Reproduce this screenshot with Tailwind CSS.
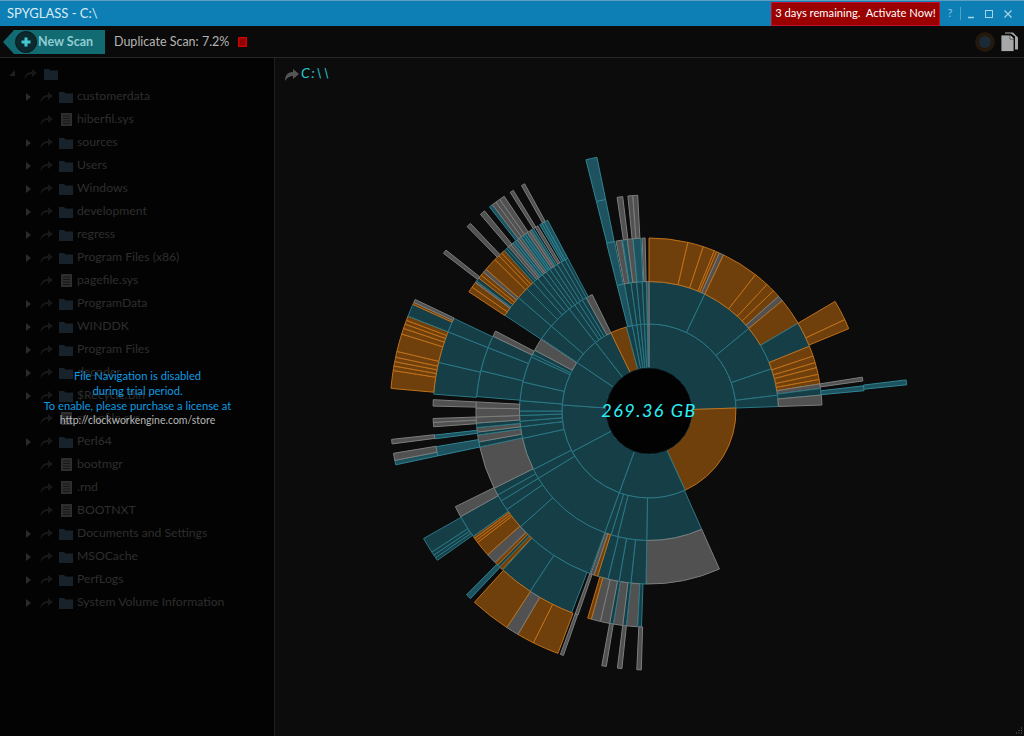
<!DOCTYPE html>
<html lang="en">
<head>
  <meta charset="UTF-8">
  <title>SPYGLASS - C:\</title>
  <script src="https://cdn.jsdelivr.net/npm/@tailwindcss/browser@4"></script>
</head>
<body class="h-[736px] w-[1024px] overflow-hidden bg-[#0c0c0c] font-['Lato',sans-serif] flex flex-col">
  <!-- Title bar -->
  <header class="h-[27px] shrink-0 bg-[#0e7fb4] border-t border-[#5f9fc0] border-b border-b-[#0a0a0a] flex items-center pl-[7px] text-[#d9ecf5] text-[13px]">
    <span>SPYGLASS - C:\</span>
    <div class="ml-auto flex items-center h-full">
      <div class="w-[169px] h-[24px] bg-[#9b0000] border border-[#c4102c] flex items-center justify-center text-white text-[11.2px] whitespace-pre">3 days remaining.  Activate Now!</div>
      <div class="w-[84px] flex items-center text-[#8cc4e2]">
        <span class="w-[20px] text-center text-[11px]">?</span>
        <span class="w-px h-[13px] bg-[#4da3cc]"></span>
        <svg class="ml-[6px]" width="8" height="10" viewBox="0 0 8 10"><path d="M1 8.5h6" stroke="#a8d4ea" stroke-width="1.5"/></svg>
        <svg class="ml-[9px]" width="10" height="10" viewBox="0 0 10 10"><rect x="1.5" y="1.5" width="7" height="7" fill="none" stroke="#a8d4ea"/></svg>
        <svg class="ml-[9px]" width="10" height="10" viewBox="0 0 10 10"><path d="M1.5 1.5l7 7M8.5 1.5l-7 7" stroke="#a8d4ea" stroke-width="1.2"/></svg>
      </div>
    </div>
  </header>

  <!-- Toolbar -->
  <div class="h-[31px] shrink-0 bg-[#0a0a0a] border-b border-[#262626] flex items-center">
    <button class="relative ml-[3px] h-[24px] w-[102px] bg-[#126a72] [clip-path:polygon(0_50%,11px_0,100%_0,100%_100%,11px_100%)] flex items-center pl-[35px] text-[#8fcdd2] text-[12.5px] font-bold">
      New Scan
      <span class="absolute left-[12px] top-px w-[22px] h-[22px] rounded-full bg-[#0a2a30] border border-[#0c1518] flex items-center justify-center">
        <svg width="12" height="12" viewBox="0 0 12 12"><path d="M6 1.5v9M1.5 6h9" stroke="#45c9d0" stroke-width="3"/></svg>
      </span>
    </button>
    <span class="ml-[9px] text-[#b4b4b4] text-[12.5px]">Duplicate Scan: 7.2%</span>
    <span class="ml-[9px] w-[9px] h-[10px] bg-[#b00000] border border-[#d00000] flex items-center justify-center"><span class="w-[5px] h-[6px] bg-[#8c0000]"></span></span>
    <div class="ml-auto mr-[4px] flex items-center gap-[5px]">
      <span class="w-[20px] h-[20px] rounded-full bg-[#1b2a36] border-[4px] border-[#24180c]"></span>
      <svg width="20" height="20" viewBox="0 0 20 20">
        <path d="M5 0.5h8l5 5v12h-3v-13l-4-3h-6z" fill="#a8a8a8"/>
        <path d="M1 3h9l4 4v12.5H1z" fill="#a8a8a8" stroke="#0a0a0a" stroke-width="0.8"/>
        <path d="M10 3v4h4" fill="#d8d8d8" stroke="#0a0a0a" stroke-width="0.6"/>
      </svg>
    </div>
  </div>

  <div class="flex-1 flex min-h-0">
    <!-- File tree -->
    <aside class="relative w-[275px] shrink-0 bg-[#030303] border-r border-[#1f1f1f] pt-[4px] text-[12.2px] text-[#2e2e2e]">
      <ul id="tree"></ul>
      <div class="absolute left-0 top-[310px] w-[275px] text-center text-[11.2px] leading-[15px] text-[#0f9be0]">
        <p>File Navigation is disabled</p>
        <p>during trial period.</p>
        <p>To enable, please purchase a license at</p>
        <p class="text-[#b5b5b5] text-[10.5px] leading-[14px]">http://clockworkengine.com/store</p>
      </div>
    </aside>

    <!-- Sunburst -->
    <main class="relative flex-1 min-w-0">
      <svg id="burst" class="block" width="748" height="678" viewBox="276 58 748 678"></svg>
      <svg class="absolute right-px bottom-px" width="9" height="9" viewBox="0 0 9 9"><path d="M7 1.5h1v1H7zM4.5 4h1v1h-1zM7 4h1v1H7zM2 6.5h1v1H2zM4.5 6.5h1v1h-1zM7 6.5h1v1H7z" fill="#6a6a6a"/></svg>
    </main>
  </div>

  <script>
    // tree rows: name, has children, icon type
    const rows = [
      ['customerdata', 1, 'd'], ['hiberfil.sys', 0, 'f'], ['sources', 1, 'd'], ['Users', 1, 'd'],
      ['Windows', 1, 'd'], ['development', 1, 'd'], ['regress', 1, 'd'], ['Program Files (x86)', 1, 'd'],
      ['pagefile.sys', 0, 'f'], ['ProgramData', 1, 'd'], ['WINDDK', 1, 'd'], ['Program Files', 1, 'd'],
      ['decoder', 1, 'd'], ['$Recycle.Bin', 1, 'd'], ['swapfile.sys', 0, 'f'], ['Perl64', 1, 'd'],
      ['bootmgr', 0, 'f'], ['.rnd', 0, 'f'], ['BOOTNXT', 0, 'f'], ['Documents and Settings', 1, 'd'],
      ['MSOCache', 1, 'd'], ['PerfLogs', 1, 'd'], ['System Volume Information', 1, 'd']
    ];
    const shareIcon = '<svg width="15" height="13" viewBox="0 0 15 13"><path d="M1.5 12.5C1.5 7.5 4.5 5 9 5V2l5 4-5 4V7C6 7 3.5 8.5 1.5 12.5z" fill="#181818"/></svg>';
    const folderIcon = '<svg width="14" height="12" viewBox="0 0 14 12"><path d="M0 2.5V1h5l1.5 1.5H14V12H0z" fill="#18222b"/></svg>';
    const fileIcon = '<svg width="11" height="13" viewBox="0 0 11 13"><rect width="11" height="13" fill="#2e2e2e"/><path d="M2 3h7M2 5.5h7M2 8h7M2 10.5h7" stroke="#161616"/></svg>';
    const caret = '<svg width="5" height="8" viewBox="0 0 5 8"><path d="M0 0l5 4-5 4z" fill="#2b2b2b"/></svg>';

    let treeHtml = `<li class="h-[23px] flex items-center pl-[9px]">
      <svg width="7" height="7" viewBox="0 0 7 7"><path d="M6 0v6H0z" fill="#1f1f1f"/></svg>
      <span class="ml-[7px] flex">${shareIcon}</span><span class="ml-[6px] flex">${folderIcon}</span></li>`;
    rows.forEach(r => {
      treeHtml += `<li class="h-[23px] flex items-center">
        <span class="w-[39px] pl-[26px] flex">${r[1] ? caret : ''}</span>
        <span class="w-[20px] flex">${shareIcon}</span>
        <span class="w-[18px] flex ${r[2] === 'f' ? 'pl-[2px]' : ''}">${r[2] === 'd' ? folderIcon : fileIcon}</span>
        <span>${r[0]}</span></li>`;
    });
    document.getElementById('tree').innerHTML = treeHtml;

    // sunburst geometry: angles in degrees clockwise from north
    const cx = 650, cy = 411;
    const R = [43, 87, 129.5, 173, 216, 259];
    const kinds = {
      t: 'fill-[#163e47] stroke-[#2a7885]',
      b: 'fill-[#1d525e] stroke-[#2f8493]',
      o: 'fill-[#6f400c] stroke-[#c0701a]',
      g: 'fill-[#505150] stroke-[#7c7e7d]'
    };
    // [ring, kind, boundary angles...]
    const data = [
      [0, 't', 0, 88], [0, 'o', 88, 155.5], [0, 't', 155.5, 200, 242, 274, 304, 322, 334],
      [0, 'o', 334, 345], [0, 't', 345, 349, 352, 354.5, 357], [0, 'g', 358.8, 360], [0, 't', 357, 358.8],

      [1, 't', 0, 25.5, 50.4, 71, 83, 88],
      [1, 't', 156, 181, 194, 197, 200, 238.7, 243.2, 257.8, 263, 265.5, 268, 270, 274.6, 283, 294.7, 296, 298],
      [1, 'g', 298, 303.6],
      [1, 't', 304, 311, 322, 325, 327, 329, 331], [1, 'g', 331, 334],
      [1, 'b', 345.8, 349], [1, 't', 349, 352, 354.5, 357], [1, 'g', 358.8, 360], [1, 't', 357, 358.8],

      [2, 'o', 0, 13, 18.3, 22.2, 23, 24], [2, 'g', 24, 25.5],
      [2, 'o', 25.5, 38, 43, 46, 48.5], [2, 'g', 48.5, 50.4],
      [2, 'o', 50.4, 59.5], [2, 't', 59.5, 68],
      [2, 'o', 68, 71.5, 73.8, 75.5, 77.8, 79.5, 81], [2, 'g', 81, 82.5], [2, 't', 82.5, 84.7], [2, 'g', 84.7, 88],
      [2, 'g', 156, 181], [2, 't', 181, 186, 190, 193.7, 197.3], [2, 'o', 197.3, 198.5], [2, 'g', 198.5, 199.7],
      [2, 't', 200, 228, 235.3, 238.7, 241, 243.5], [2, 'g', 243.5, 258],
      [2, 't', 258, 259.7], [2, 'g', 259.7, 262], [2, 't', 262, 263], [2, 'g', 263, 264.5], [2, 't', 264.5, 266], [2, 'g', 266, 268, 271, 273],
      [2, 't', 274.8, 283.5, 291.5, 295.6], [2, 'g', 295.6, 297.5],
      [2, 't', 303.6, 311, 315, 318, 320, 322, 323.5, 325, 326.5, 328, 329.5, 331, 332],
      [2, 'b', 345.8, 348.5], [2, 'g', 349, 351], [2, 'b', 351.2, 352.8], [2, 'g', 352.8, 354.7], [2, 'b', 354.7, 357.3], [2, 'g', 357.7, 358.7],

      [3, 'o', 59.5, 65, 67.6], [3, 'g', 81, 82], [3, 'b', 83.3, 84.6],
      [3, 'g', 183, 186], [3, 't', 182, 183], [3, 't', 186, 187], [3, 'g', 187, 189.5], [3, 't', 189.5, 190.5], [3, 'g', 190.5, 193, 195.5], [3, 'o', 195.5, 196.5],
      [3, 'g', 199.2, 200],
      [3, 't', 201, 213.4, 222.6], [3, 'o', 222.8, 223.8], [3, 't', 223.8, 224.5], [3, 'o', 224.5, 225.3], [3, 'g', 225.5, 228.3],
      [3, 'o', 228.3, 232.5, 233.2, 233.9, 234.5], [3, 't', 234.5, 240.7], [3, 'g', 240.7, 243.7],
      [3, 'b', 258, 260.5], [3, 'b', 262.6, 263.6], [3, 'g', 265.8, 267, 268], [3, 'g', 271.3, 273],
      [3, 't', 274.5, 283, 291.5, 295.4],
      [3, 'o', 303.5, 305, 306.5], [3, 'g', 306.5, 307], [3, 't', 307, 308], [3, 'o', 308, 309, 310], [3, 'g', 310, 311],
      [3, 'o', 311, 314.5, 316, 317, 318], [3, 't', 318, 318.8, 319.5], [3, 'g', 319.5, 320.3, 321], [3, 'b', 321, 321.7, 322.4], [3, 'g', 322.4, 323, 323.7], [3, 'b', 323.7, 324.4, 325, 325.7], [3, 'g', 325.7, 326.4, 327], [3, 'b', 327, 327.7], [3, 'g', 328.2, 329], [3, 'b', 329.6, 330.3, 331, 332],
      [3, 'g', 351.5, 353], [3, 'g', 354.4, 355.7, 357], [3, 'b', 345.9, 348.4],

      [4, 'b', 83.1, 84.2], [4, 'g', 181.7, 182.7], [4, 'g', 186, 187], [4, 'g', 189.5, 190.5],
      [4, 'o', 200.6, 206.5], [4, 'o', 206.5, 210.4], [4, 'g', 210.4, 213.3], [4, 'o', 213.3, 222.4], [4, 'g', 199.3, 200],
      [4, 'b', 223.6, 224.8],
      [4, 't', 234.8, 235.5, 236.2, 237, 240.5],
      [4, 'g', 262.7, 263.7], [4, 'b', 258, 259], [4, 'g', 259, 260.6],
      [4, 'o', 275, 279, 280, 281, 282, 283.3, 287.3, 288.6, 289.6, 290.5, 291.5], [4, 't', 291.5, 294.3], [4, 'o', 294.3, 294.8], [4, 'g', 294.8, 295.5],
      [4, 'g', 307.5, 308.4], [4, 'g', 315.4, 316.4], [4, 'g', 319.4, 320.6],
      [4, 'b', 322, 322.8], [4, 'g', 322.8, 323.8, 324.8, 326], [4, 'g', 327.6, 328.4], [4, 'g', 330.5, 331.3],
      [4, 'b', 345.9, 348.4]
    ];

    const pt = (r, a) => {
      const t = a * Math.PI / 180;
      return (cx + r * Math.sin(t)).toFixed(1) + ' ' + (cy - r * Math.cos(t)).toFixed(1);
    };
    const wedge = (ring, a0, a1) => {
      const r0 = R[ring], r1 = R[ring + 1];
      return `M${pt(r0, a0)}L${pt(r1, a0)}A${r1} ${r1} 0 0 1 ${pt(r1, a1)}L${pt(r0, a1)}A${r0} ${r0} 0 0 0 ${pt(r0, a0)}Z`;
    };

    let svg = '';
    data.forEach(d => {
      for (let i = 2; i < d.length - 1; i++) {
        svg += `<path d="${wedge(d[0], d[i], d[i + 1])}" class="${kinds[d[1]]}" stroke-width="1"/>`;
      }
    });
    svg += `<circle cx="${cx}" cy="${cy}" r="43" fill="#020202" stroke="#0d1f24"/>`;
    svg += `<text x="${cx}" y="417" text-anchor="middle" class="fill-[#2df0f5] font-['Lato',sans-serif] italic text-[18px] tracking-[1.5px]">269.36 GB</text>`;
    // path label sits in the same canvas, top left of the pane
    svg += `<path d="M286 81C286 75 289 72 294 72V69L300 74 294 79V76C291 76 288 77.5 286 81z" fill="#555"/>`;
    svg += `<text x="302" y="78" class="fill-[#25c8cf] font-['Lato',sans-serif] italic text-[14px] tracking-[1.5px]">C:\\\\</text>`;
    document.getElementById('burst').innerHTML = svg;
  </script>
</body>
</html>
